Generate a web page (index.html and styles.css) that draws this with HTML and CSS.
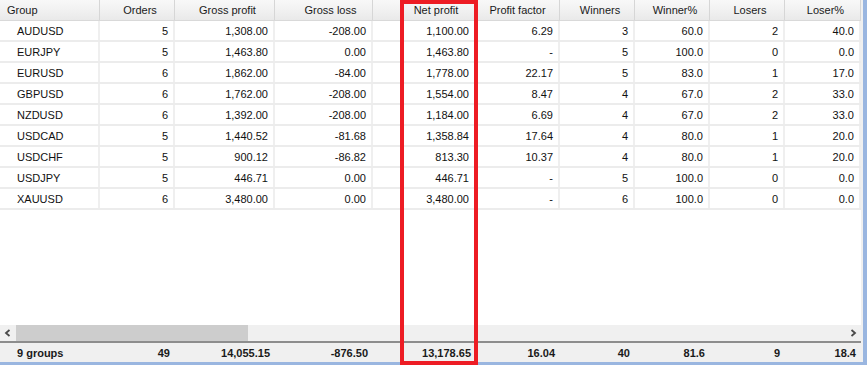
FILE: index.html
```html
<!DOCTYPE html>
<html>
<head>
<meta charset="utf-8">
<link rel="stylesheet" href="styles.css">
</head>
<body>
<div class="window">
  <div class="main">
    <div class="grid">
      <div class="row head">
        <div class="c left">Group</div>
        <div class="c">Orders</div>
        <div class="c">Gross profit</div>
        <div class="c gl">Gross loss</div>
        <div class="c np">Net profit</div>
        <div class="c pf">Profit factor</div>
        <div class="c">Winners</div>
        <div class="c">Winner%</div>
        <div class="c">Losers</div>
        <div class="c">Loser%</div>
      </div>
      <div class="row data"><div class="c name">AUDUSD</div><div class="c">5</div><div class="c">1,308.00</div><div class="c">-208.00</div><div class="c">1,100.00</div><div class="c">6.29</div><div class="c">3</div><div class="c">60.0</div><div class="c">2</div><div class="c">40.0</div></div>
      <div class="row data"><div class="c name">EURJPY</div><div class="c">5</div><div class="c">1,463.80</div><div class="c">0.00</div><div class="c">1,463.80</div><div class="c">-</div><div class="c">5</div><div class="c">100.0</div><div class="c">0</div><div class="c">0.0</div></div>
      <div class="row data"><div class="c name">EURUSD</div><div class="c">6</div><div class="c">1,862.00</div><div class="c">-84.00</div><div class="c">1,778.00</div><div class="c">22.17</div><div class="c">5</div><div class="c">83.0</div><div class="c">1</div><div class="c">17.0</div></div>
      <div class="row data"><div class="c name">GBPUSD</div><div class="c">6</div><div class="c">1,762.00</div><div class="c">-208.00</div><div class="c">1,554.00</div><div class="c">8.47</div><div class="c">4</div><div class="c">67.0</div><div class="c">2</div><div class="c">33.0</div></div>
      <div class="row data"><div class="c name">NZDUSD</div><div class="c">6</div><div class="c">1,392.00</div><div class="c">-208.00</div><div class="c">1,184.00</div><div class="c">6.69</div><div class="c">4</div><div class="c">67.0</div><div class="c">2</div><div class="c">33.0</div></div>
      <div class="row data"><div class="c name">USDCAD</div><div class="c">5</div><div class="c">1,440.52</div><div class="c">-81.68</div><div class="c">1,358.84</div><div class="c">17.64</div><div class="c">4</div><div class="c">80.0</div><div class="c">1</div><div class="c">20.0</div></div>
      <div class="row data"><div class="c name">USDCHF</div><div class="c">5</div><div class="c">900.12</div><div class="c">-86.82</div><div class="c">813.30</div><div class="c">10.37</div><div class="c">4</div><div class="c">80.0</div><div class="c">1</div><div class="c">20.0</div></div>
      <div class="row data"><div class="c name">USDJPY</div><div class="c">5</div><div class="c">446.71</div><div class="c">0.00</div><div class="c">446.71</div><div class="c">-</div><div class="c">5</div><div class="c">100.0</div><div class="c">0</div><div class="c">0.0</div></div>
      <div class="row data"><div class="c name">XAUUSD</div><div class="c">6</div><div class="c">3,480.00</div><div class="c">0.00</div><div class="c">3,480.00</div><div class="c">-</div><div class="c">6</div><div class="c">100.0</div><div class="c">0</div><div class="c">0.0</div></div>
    </div>
    <div class="spacer"></div>
    <div class="scrollbar">
      <div class="arrow">
        <svg width="8" height="8" viewBox="0 0 8 8"><polyline points="5.5,1 2,4 5.5,7" fill="none" stroke="#4a4a4a" stroke-width="1.8"/></svg>
      </div>
      <div class="track"><div class="thumb"></div></div>
      <div class="arrow">
        <svg width="8" height="8" viewBox="0 0 8 8"><polyline points="2.5,1 6,4 2.5,7" fill="none" stroke="#4a4a4a" stroke-width="1.8"/></svg>
      </div>
    </div>
    <div class="row foot">
      <div class="c name">9 groups</div><div class="c">49</div><div class="c">14,055.15</div><div class="c">-876.50</div><div class="c">13,178.65</div><div class="c">16.04</div><div class="c">40</div><div class="c">81.6</div><div class="c">9</div><div class="c">18.4</div>
    </div>
  </div>
  <div class="highlight"></div>
</div>
</body>
</html>
```

FILE: styles.css
```css
html, body {
  margin: 0;
  padding: 0;
  background: #ffffff;
}
body {
  font-family: "Liberation Sans", Arial, sans-serif;
  font-size: 11px;
  color: #111;
}
.window {
  position: relative;
  width: 863px;
  height: 362px;
  border-right: 4px solid #9ab6e0;
  border-bottom: 3px solid #9ab6e0;
  background: #f0f0f0;
}
.main {
  display: flex;
  flex-direction: column;
  width: 861px;
  height: 362px;
  background: #ffffff;
}
.row {
  display: grid;
  grid-template-columns: 100px 75px 100px 98px 103px 84px 75px 75px 75px 76px;
}
.c {
  overflow: hidden;
  white-space: nowrap;
  box-sizing: border-box;
}
.head {
  height: 21px;
  background: linear-gradient(#f8f8f8 0%, #f2f2f2 45%, #e9e9e9 100%);
  border-bottom: 1px solid #d9d9d9;
  box-sizing: border-box;
}
.head .c {
  line-height: 20px;
  text-align: center;
  padding-left: 6px;
  border-right: 1px solid #d6d6d6;
  color: #1a1a1a;
}
.head .c.left {
  text-align: left;
  padding-left: 7px;
}
.head .c.gl { padding-left: 14px; }
.head .c.np { padding-left: 24px; }
.head .c.pf { padding-left: 0; }
.data {
  height: 21px;
  border-bottom: 2px solid #ececec;
  box-sizing: border-box;
}
.data .c {
  line-height: 21px;
  height: 19px;
  text-align: right;
  padding-right: 5px;
  border-right: 2px solid #efefef;
}
.data .c.name,
.foot .c.name {
  text-align: left;
  padding-left: 17px;
}
.spacer {
  flex: 1;
}
.scrollbar {
  display: flex;
  height: 16px;
  background: #f0f0f0;
}
.arrow {
  width: 16px;
  display: flex;
  align-items: center;
  justify-content: center;
}
.track {
  flex: 1;
  display: flex;
}
.thumb {
  width: 232px;
  background: #cdcdcd;
}
.foot {
  height: 21px;
  border-top: 2px solid #8d8d8d;
  background: #f0f0f0;
  box-sizing: border-box;
  font-weight: bold;
  color: #1a1a1a;
}
.foot .c {
  line-height: 20px;
  text-align: right;
  padding-right: 5px;
}
.highlight {
  position: absolute;
  left: 400px;
  top: 0;
  width: 78px;
  height: 365px;
  box-sizing: border-box;
  border: 4px solid #ed1c24;
}
```
